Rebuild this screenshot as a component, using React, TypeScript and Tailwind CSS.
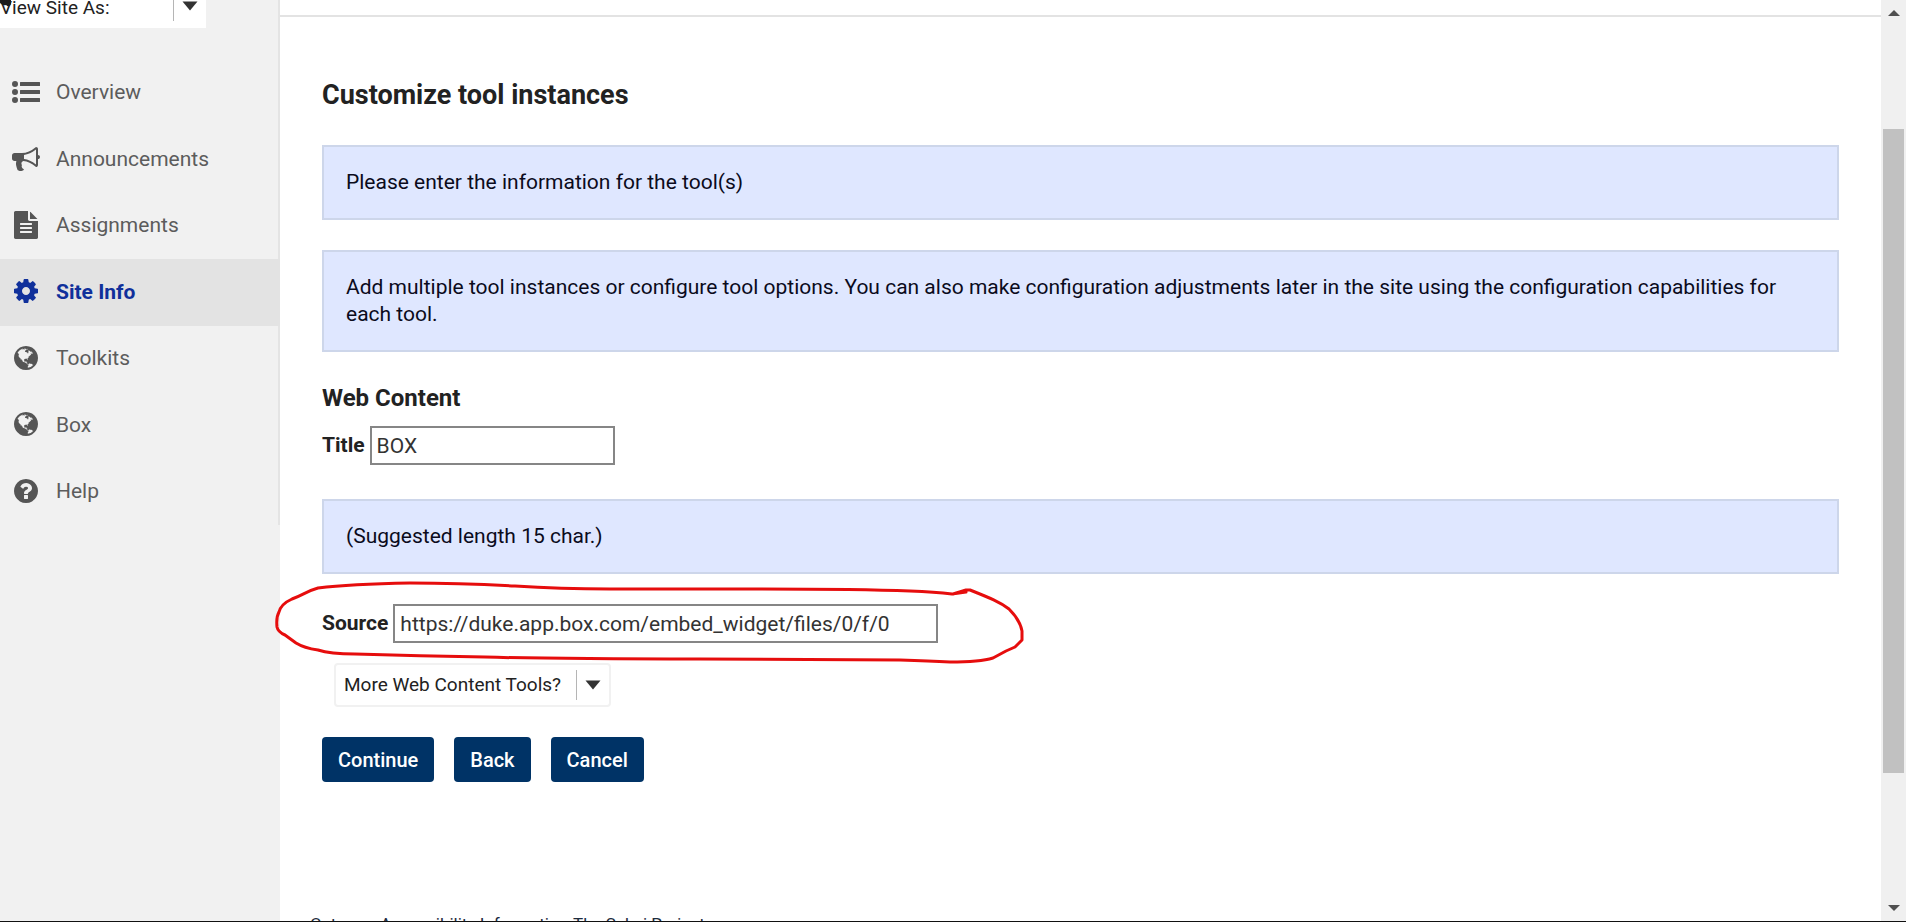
import React from "react";

const FONT = "font-[Roboto,'Liberation_Sans',sans-serif]";

const GLOBE =
  "M896 128q209 0 385.5 103t279.5 279.5 103 385.5-103 385.5-279.5 279.5-385.5 103-385.5-103-279.5-279.5-103-385.5 103-385.5 279.5-279.5 385.5-103zm274 521q-2 1-9.5 9.5t-13.5 9.5q2 0 4.5-5t5-11 3.5-7q6-7 22-15 14-6 52-12 34-8 51 11-2-2 9.5-13t14.5-12q3-2 15-4.5t15-7.5l2-22q-12 1-17.5-7t-6.5-21q0 2-6 8 0-7-4.5-8t-11.5 1-9 1q-10-3-15-7.5t-8-16.5-4-15q-2-5-9.5-11t-9.5-10q-1-2-2.5-5.5t-3-6.5-4-5.5-5.5-2.5-7 5-7.5 10-4.5 5q-3-2-6-1.5t-4.5 1-4.5 3-5 3.5q-3 2-8.5 3t-8.5 2q15-5-1-11-10-4-16-3 9-4 7.5-12t-8.5-14h5q-1-4-8.5-8.5t-17.5-8.5-13-6q-8-5-34-9.5t-33-.5q-5 6-4.5 10.5t4 14 3.5 12.5q1 6-5.5 13t-6.5 12q0 7 14 15.5t10 21.5q-3 8-16 16t-16 12q-5 8-1.5 18.5t10.5 16.5q2 2 1.5 4t-3.5 4.5-5.5 4-6.5 3.5l-3 2q-11 5-20.5-6t-13.5-26q-7-25-16-30-23-8-29 1-5-13-41-26-25-9-58-4 6-1 0-15-7-15-19-12 3-6 4-17.5t1-13.5q3-13 12-23 1-1 7-8.5t9.5-13.5.5-6q35 4 50-11 5-5 11.5-17t10.5-17q9-6 14-5.5t14.5 5.5 14.5 5q14 1 15.5-11t-7.5-20q12 1 3-17-4-7-8-9-12-4-27 5-8 4 2 8-1-1-9.5 10.5t-16.5 17.5-16-5q-1-1-5.5-13.5t-9.5-13.5q-8 0-16 15 3-8-11-15t-24-8q19-12-8-27-7-4-20.5-5t-19.5 4q-5 7-5.5 11.5t5 8 10.5 5.5 11.5 4 8.5 3q14 10 8 14-2 1-8.5 3.5t-11.5 4.5-6 4q-3 4 0 14t-2 14q-5-5-9-17.5t-7-16.5q7 9-25 6l-10-1q-4 0-16 2t-20.5 1-13.5-8q-4-8 0-20 1-4 4-2-4-3-11-9.5t-10-8.5q-46 15-94 41 6 1 12-1 5-2 13-6.5t10-5.5q34-14 42-7l5-5q14 16 20 25-7-4-30-1-20 6-22 12 7 12 5 18-4-3-11.5-10t-14.5-11-15-5q-16 0-22 1-146 80-235 222 7 7 12 8 4 1 5 9t2.5 11 11.5-3q9 8 3 19 1-1 44 27 19 17 21 21 3 11-10 18-1-2-9-9t-9-4q-3 5 .5 18.5t10.5 12.5q-7 0-9.5 16t-2.5 35.5-1 23.5l2 1q-3 12 5.5 34.5t21.5 19.5q-13 3 20 43 6 8 8 9 3 2 12 7.5t15 10 10 10.5q4 5 10 22.5t14 23.5q-2 6 9.5 20t10.5 23q-1 0-2.5 1t-2.5 1q3 7 15.5 14t15.5 13q1 3 2 10t3 11 8 2q2-20-24-62-15-25-17-29-3-5-5.5-15.5t-4.5-14.5q2 0 6 1.5t8.5 3.5 7.5 4 2 3q-3 7 2 17.5t12 18.5 17 19 12 13q6 6 14 19.5t0 13.5q9 0 20 10.5t17 19.5q5 8 8 26t5 24q2 7 8.5 13.5t12.5 9.5l16 8 13 7q5 2 18.5 10.5t21.5 11.5q10 4 16 4t14.5-2.5 13.5-3.5q15-2 29 15t21 21q36 19 55 11-2 1 .5 7.5t8 15.5 9 14.5 5.5 8.5q5 6 18 15t18 15q6-4 7-9-3 8 7 20t18 10q14-3 14-32-31 15-49-18 0-1-2.5-5.5t-4-8.5-2.5-8.5 0-7.5 5-3q9 0 10-3.5t-2-12.5-4-13q-1-8-11-20t-12-15q-5 9-16 8t-16-9q0 1-1.5 5.5t-1.5 6.5q-13 0-15-1 1-3 2.5-17.5t3.5-22.5q1-4 5.5-12t7.5-14.5 4-12.5-4.5-9.5-17.5-2.5q-19 1-26 20-1 3-3 10.5t-5 11.5-9 7q-7 3-24 2t-24-5q-13-8-22.5-29t-9.5-37q0-10 2.5-26.5t3-25-5.5-24.5q3-2 9-9.5t10-10.5q2-1 4.5-1.5t4.5 0 4-1.5 3-6q-1-1-4-3-3-3-4-3 7 3 28.5-1.5t27.5 1.5q15 11 22-2 0-1-2.5-9.5t-.5-13.5q5 27 29 9 3 3 15.5 5t17.5 5q3 2 7 5.5t5.5 4.5 5-.5 8.5-6.5q10 14 12 24 11 40 19 44 7 3 11 2t4.5-9.5 0-14-1.5-12.5l-1-8v-18l-1-8q-15-3-18.5-12t1.5-18.5 15-18.5q1-1 8-3.5t15.5-6.5 12.5-8q21-19 15-35 7 0 11-9-1 0-5-3t-7.5-5-4.5-2q9-5 2-16 5-3 7.5-11t7.5-10q9 12 21 2 8-8 1-16 5-7 20.5-10.5t18.5-9.5q7 2 8-2t1-12 3-12q4-5 15-9t13-5l17-11q3-4 0-4 18 2 31-11 10-11-6-20 3-6-3-9.5t-15-5.5q3-1 11.5-.5t10.5-1.5q15-10-7-16-17-5-43 12zm-163 877q206-36 351-189-3-3-12.5-4.5t-12.5-3.5q-18-7-24-8 1-7-2.5-13t-8-9-12.5-8-11-7q-2-2-7-6t-7-5.5-7.5-4.5-8.5-2-10 1l-3 1q-3 1-5.5 2.5t-5.5 3-4 3 0 2.5q-21-17-36-22-5-1-11-5.5t-10.5-7-10-1.5-11.5 7q-5 5-6 15t-2 13q-7-5 0-17.5t2-18.5q-3-6-10.5-4.5t-12 4.5-11.5 8.5-9 6.5-8.5 5.5-8.5 7.5q-3 4-6 12t-5 11q-2-4-11.5-6.5t-9.5-5.5q2 10 4 35t5 38q7 31-12 48-27 25-29 40-4 22 12 26 0 7-8 20.5t-7 21.5q0 6 2 16z";

const LIST =
  "M384 1408a192 192 0 1 1-384 0a192 192 0 1 1 384 0zM384 896a192 192 0 1 1-384 0a192 192 0 1 1 384 0zM384 384a192 192 0 1 1-384 0a192 192 0 1 1 384 0zM544 1280h1216q32 0 32 32v192q0 32-32 32h-1216q-32 0-32-32v-192q0-32 32-32zM544 768h1216q32 0 32 32v192q0 32-32 32h-1216q-32 0-32-32v-192q0-32 32-32zM544 256h1216q32 0 32 32v192q0 32-32 32h-1216q-32 0-32-32v-192q0-32 32-32z";

const BULLHORN =
  "M1664 640q53 0 90.5 37.5t37.5 90.5-37.5 90.5-90.5 37.5v384q0 52-38 90t-90 38q-417-347-812-380-58 19-91 66t-31 100.5 40 92.5q-20 33-23 65.5t6 58 33.5 55 48 50 61.5 50.5q-29 58-111.5 83t-168.5 11.5-132-55.5q-7-23-29.5-87.5t-32-94.5-23-89-15-101 3.5-98.5 22-110.5h-122q-66 0-113-47t-47-113v-192q0-66 47-113t113-47h480q435 0 896-384 52 0 90 38t38 90v384zm-128 604v-954q-394 302-768 343v270q377 42 768 341z";

const FILE =
  "M1596 476q14 14 28 36h-472v-472q22 14 36 28zm-476 164h544v1056q0 40-28 68t-68 28h-1344q-40 0-68-28t-28-68v-1600q0-40 28-68t68-28h800v544q0 40 28 68t68 28zm160 736v-64q0-14-9-23t-23-9h-704q-14 0-23 9t-9 23v64q0 14 9 23t23 9h704q14 0 23-9t9-23zm0-256v-64q0-14-9-23t-23-9h-704q-14 0-23 9t-9 23v64q0 14 9 23t23 9h704q14 0 23-9t9-23zm0-256v-64q0-14-9-23t-23-9h-704q-14 0-23 9t-9 23v64q0 14 9 23t23 9h704q14 0 23-9t9-23z";

const COG =
  "M1152 896q0-106-75-181t-181-75-181 75-75 181 75 181 181 75 181-75 75-181zm512-109v222q0 12-8 23t-20 13l-185 28q-19 54-39 91 35 50 107 138 10 12 10 25t-9 23q-27 37-99 108t-94 71q-12 0-26-9l-138-108q-44 23-91 38-16 136-29 186-7 28-36 28h-222q-14 0-24.5-8.5t-11.5-21.5l-28-184q-49-16-90-37l-141 107q-10 9-25 9-14 0-25-11-126-114-165-168-7-10-7-23 0-12 8-23 15-21 51-66.5t54-70.5q-27-50-41-99l-183-27q-13-2-21-12.5t-8-23.5v-222q0-12 8-23t19-13l186-28q14-46 39-92-40-57-107-138-10-12-10-24 0-10 9-23 26-36 98.5-107.5t94.5-71.5q13 0 26 10l138 107q44-23 91-38 16-136 29-186 7-28 36-28h222q14 0 24.5 8.5t11.5 21.5l28 184q49 16 90 37l142-107q9-9 24-9 13 0 25 10 129 119 165 170 7 8 7 22 0 12-8 23-15 21-51 66.5t-54 70.5q26 50 41 98l183 28q13 2 21 12.5t8 23.5z";

const QUESTION =
  "M1024 1376v-192q0-14-9-23t-23-9h-192q-14 0-23 9t-9 23v192q0 14 9 23t23 9h192q14 0 23-9t9-23zm256-672q0-88-55.5-163t-138.5-116-170-41q-243 0-371 213-15 24 8 42l132 100q7 6 19 6 16 0 25-12 53-68 86-92 34-24 86-24 48 0 85.5 26t37.5 59q0 38-20 61t-68 45q-63 28-115.5 86.5t-52.5 125.5v36q0 14 9 23t23 9h192q14 0 23-9t9-23q0-19 21.5-49.5t54.5-49.5q32-18 49-28.5t46-35 44.5-48 28-60.5 12.5-81zm384 192q0 209-103 385.5t-279.5 279.5-385.5 103-385.5-103-279.5-279.5-103-385.5 103-385.5 279.5-279.5 385.5-103 385.5 103 279.5 279.5 103 385.5z";

const NAV = [
  { label: "Overview", icon: LIST },
  { label: "Announcements", icon: BULLHORN },
  { label: "Assignments", icon: FILE },
  { label: "Site Info", icon: COG, active: true },
  { label: "Toolkits", icon: GLOBE },
  { label: "Box", icon: GLOBE },
  { label: "Help", icon: QUESTION },
];

function SelectArrow() {
  return (
    <span className="pointer-events-none absolute inset-y-0 right-2 flex items-center gap-2">
      <span className="h-[30px] w-px bg-[#b5b5b5]" />
      <svg width="16" height="10" viewBox="0 0 16 10" aria-hidden="true">
        <path d="M0.5 0.5H15.5L8 9.5Z" fill="#333" />
      </svg>
    </span>
  );
}

function Sidebar() {
  return (
    <aside className="w-[280px] shrink-0 bg-[#f1f1f1]">
      <div className="flex flex-col border-r-2 border-[#e4e4e4]">
        <div className="relative -mt-4 h-11 w-[206px] bg-white">
          <select
            aria-label="View Site As:"
            className="h-full w-full appearance-none bg-transparent pt-1 text-[19px] text-[#222] outline-none"
          >
            <option>View Site As:</option>
          </select>
          <SelectArrow />
          <svg className="absolute left-0 top-4" width="12" height="8" viewBox="0 0 12 8" aria-hidden="true">
            <path d="M0 0H11V4Q9 8 6 5Q3 6 0 3Z" fill="#1c1c1c" />
          </svg>
        </div>
        <nav className="mt-8 flex h-[465px] flex-col">
          {NAV.map((item) => (
            <a
              key={item.label}
              href="#"
              aria-current={item.active ? "page" : undefined}
              className={
                item.active
                  ? "-mr-0.5 flex flex-1 items-center gap-4 bg-[#e3e3e3] pl-3 text-[21px] font-bold text-[#10309b]"
                  : "flex flex-1 items-center gap-4 pl-3 text-[21px] text-[#5c5c5c]"
              }
            >
              <svg
                className={item.active ? "mb-0.5 size-7 text-[#10309b]" : "mb-0.5 size-7 text-[#555]"}
                viewBox="0 0 1792 1792"
                fill="currentColor"
                aria-hidden="true"
              >
                <path d={item.icon} />
              </svg>
              {item.label}
            </a>
          ))}
        </nav>
      </div>
    </aside>
  );
}

function Notice({ children }: { children: React.ReactNode }) {
  return (
    <p className="border-2 border-[#cdd6ea] bg-[#dfe7ff] px-[22px] py-[22px] text-[21px] leading-[27px] text-[#0b0b1c]">
      {children}
    </p>
  );
}

function Annotation() {
  return (
    <svg
      className="pointer-events-none absolute -left-12 -top-6"
      width="756"
      height="84"
      viewBox="274 582 756 84"
      fill="none"
      stroke="#e60d0d"
      strokeWidth="3"
      strokeLinecap="round"
      strokeLinejoin="round"
      aria-hidden="true"
    >
      <path d="M966 594L952 596Q935 594 910 593Q860 591 760 591H610Q560 591 515 588Q460 585 410 585Q350 586 318 590C307 593 303 597 292 601Q281 606 279 614Q276 619 277 629Q278 634 285 637L296 645Q304 650 318 652Q330 656 355 656Q420 658 485 659Q550 661 700 661L900 662Q930 663 950 664Q980 664 993 660L1006 653L1015 649L1022 642V633Q1020 622 1009 611C1000 604 990 600 970 592L966 592L953 596" />
    </svg>
  );
}

function Scrollbar() {
  return (
    <div className="flex w-[25px] shrink-0 flex-col items-center bg-[#f0f0f0] py-2" aria-hidden="true">
      <svg width="12" height="10" viewBox="0 0 12 10">
        <path d="M0 8L6 2L12 8Z" fill="#505050" />
      </svg>
      <div className="grow-[111]" />
      <div className="w-[21px] grow-[644] bg-[#c1c1c1]" />
      <div className="grow-[130]" />
      <svg width="12" height="10" viewBox="0 0 12 10">
        <path d="M0 2L6 8L12 2Z" fill="#505050" />
      </svg>
    </div>
  );
}

const inputClass = "h-[39px] border-2 border-[#868686] bg-white px-[5px] text-[21px] text-[#333] outline-none";
const buttonClass = "h-[45px] rounded-[4px] bg-[#003366] px-4 text-xl font-medium text-white";

export default function App() {
  return (
    <div className={`${FONT} flex h-screen overflow-hidden border-b border-[#111] bg-white text-[#222]`}>
      <Sidebar />
      <main className="min-w-0 flex-1">
        <div className="h-[17px] border-b-2 border-[#e3e3e3]" />
        <div className="px-[42px] pt-[60px]">
          <h1 className="text-[27px] leading-9 font-bold">Customize tool instances</h1>
          <form className="mt-8" onSubmit={(e) => e.preventDefault()}>
            <div className="flex flex-col gap-[30px]">
              <Notice>Please enter the information for the tool(s)</Notice>
              <Notice>
                Add multiple tool instances or configure tool options. You can also make configuration
                adjustments later in the site using the configuration capabilities for each tool.
              </Notice>
            </div>
            <h2 className="mt-[30px] text-2xl font-bold">Web Content</h2>
            <div className="mt-3 mb-[34px] flex items-center gap-[5px]">
              <label htmlFor="title" className="text-[21px] font-bold">
                Title
              </label>
              <input id="title" defaultValue="BOX" className={`${inputClass} w-[245px]`} />
            </div>
            <Notice>(Suggested length 15 char.)</Notice>
            <div className="relative mt-[30px] flex items-center gap-[5px]">
              <label htmlFor="source" className="text-[21px] font-bold">
                Source
              </label>
              <input
                id="source"
                defaultValue="https://duke.app.box.com/embed_widget/files/0/f/0"
                className={`${inputClass} w-[545px]`}
              />
              <Annotation />
            </div>
            <div className="relative mt-5 ml-3 h-11 w-[277px] rounded-[4px] border-2 border-[#f1f1f1]">
              <select
                aria-label="More Web Content Tools?"
                className="h-full w-full appearance-none bg-transparent pl-2 text-[19px] text-[#222] outline-none"
              >
                <option>More Web Content Tools?</option>
              </select>
              <SelectArrow />
            </div>
            <div className="mt-[30px] flex gap-5">
              <button type="submit" className={buttonClass}>
                Continue
              </button>
              <button type="button" className={buttonClass}>
                Back
              </button>
              <button type="button" className={buttonClass}>
                Cancel
              </button>
            </div>
          </form>
        </div>
        <footer className="mt-[130px] flex gap-[5px] px-[30px] text-[17px] leading-6 text-[#1d2b3d]">
          <a href="#">Gateway</a>
          <a href="#">Accessibility Information</a>
          <a href="#">The Sakai Project</a>
        </footer>
      </main>
      <Scrollbar />
    </div>
  );
}
